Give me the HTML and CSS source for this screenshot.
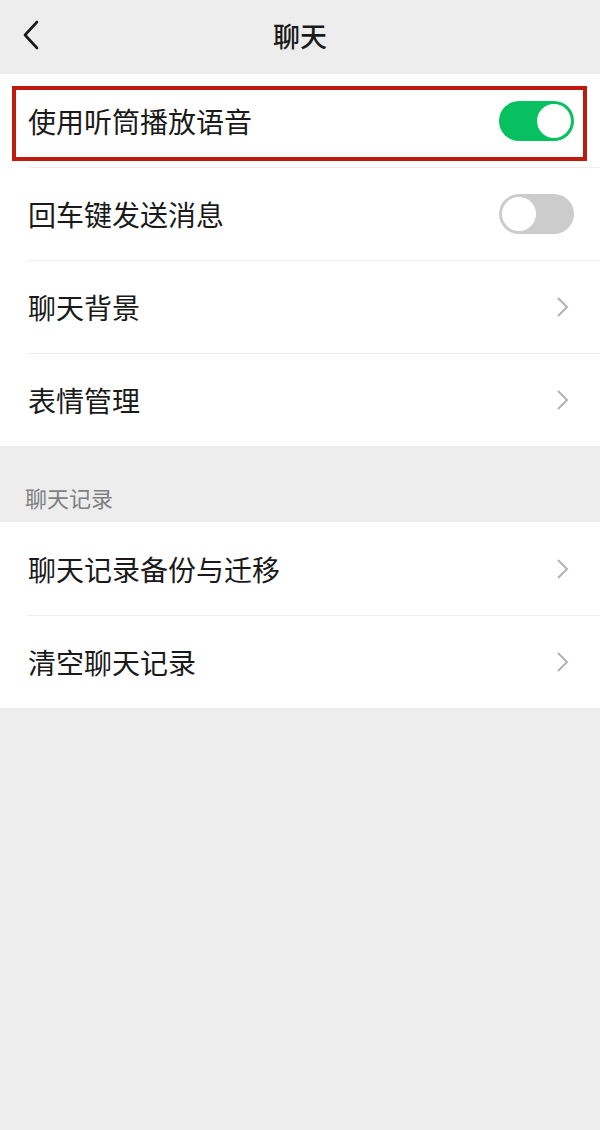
FILE: index.html
```html
<!DOCTYPE html>
<html lang="zh-CN">
<head>
    <meta charset="UTF-8">
    <title>聊天</title>
    <link rel="stylesheet" href="styles.css">
</head>
<body>
  <div class="page">
      <div class="header">
          <span class="back">
              <svg width="20" height="30" viewBox="0 0 20 30"><path d="M15 2 L3 15 L15 28" fill="none" stroke="#1a1a1a" stroke-width="2.6" stroke-linecap="round" stroke-linejoin="round"/></svg>
          </span>
          <span class="title">聊天</span>
      </div>

      <ul class="group">
          <li class="row marked">
              <span class="label">使用听筒播放语音</span>
              <span class="switch on"><i></i></span>
              <span class="mark"></span>
          </li>
          <li class="row">
              <span class="label">回车键发送消息</span>
              <span class="switch"><i></i></span>
          </li>
          <li class="row">
              <span class="label">聊天背景</span>
              <span class="arrow"><svg width="14" height="22" viewBox="0 0 14 22"><path d="M2 2 L11 11 L2 20" fill="none" stroke="#b2b2b2" stroke-width="2"/></svg></span>
          </li>
          <li class="row">
              <span class="label">表情管理</span>
              <span class="arrow"><svg width="14" height="22" viewBox="0 0 14 22"><path d="M2 2 L11 11 L2 20" fill="none" stroke="#b2b2b2" stroke-width="2"/></svg></span>
          </li>
      </ul>

      <div class="group-title">聊天记录</div>

      <ul class="group">
          <li class="row">
              <span class="label">聊天记录备份与迁移</span>
              <span class="arrow"><svg width="14" height="22" viewBox="0 0 14 22"><path d="M2 2 L11 11 L2 20" fill="none" stroke="#b2b2b2" stroke-width="2"/></svg></span>
          </li>
          <li class="row">
              <span class="label">清空聊天记录</span>
              <span class="arrow"><svg width="14" height="22" viewBox="0 0 14 22"><path d="M2 2 L11 11 L2 20" fill="none" stroke="#b2b2b2" stroke-width="2"/></svg></span>
          </li>
      </ul>
  </div>
</body>
</html>
```

FILE: styles.css
```css
*{
    margin: 0;
    padding: 0;
}
ul{
    list-style: none;
}
html,body{
    height: 100%;
}
body{
    background: #ededed;
    font-family: "Noto Sans CJK SC", "Noto Sans", sans-serif;
    color: #1a1a1a;
}
.page{
    width: 600px;
}
.header{
    height: 74px;
    display: flex;
    align-items: center;
    justify-content: center;
    position: relative;
}
.back{
    position: absolute;
    left: 22px;
    top: 20px;
}
.title{
    font-size: 27px;
    font-weight: 500;
    margin-top: -4px;
}
.group{
    background: #fff;
}
.row{
    height: 93px;
    display: flex;
    align-items: center;
    justify-content: space-between;
    padding: 0 26px 0 28px;
    position: relative;
}
.row + .row::before{
    content: "";
    position: absolute;
    left: 28px;
    right: 0;
    top: 0;
    border-top: 1px solid #ececec;
}
.label{
    font-size: 28px;
    line-height: 1;
}
.marked .label{
    margin-top: 0;
}
/* 红框标注 */
.mark{
    position: absolute;
    left: 12px;
    right: 13px;
    top: 12px;
    bottom: 6px;
    border: 4px solid #be1a0e;
}
.switch{
    width: 75px;
    height: 40px;
    border-radius: 20px;
    background: #cccccc;
    position: relative;
}
.switch i{
    position: absolute;
    left: 3px;
    top: 3px;
    width: 34px;
    height: 34px;
    border-radius: 50%;
    background: #fff;
}
.switch.on{
    background: #07c160;
}
.switch.on i{
    left: 38px;
}
.arrow{
    display: flex;
    margin-right: 4px;
}
.group-title{
    height: 76px;
    padding-left: 25px;
    font-size: 22px;
    color: #7f7f7f;
    display: flex;
    align-items: center;
    padding-top: 26px;
    box-sizing: border-box;
}
```
